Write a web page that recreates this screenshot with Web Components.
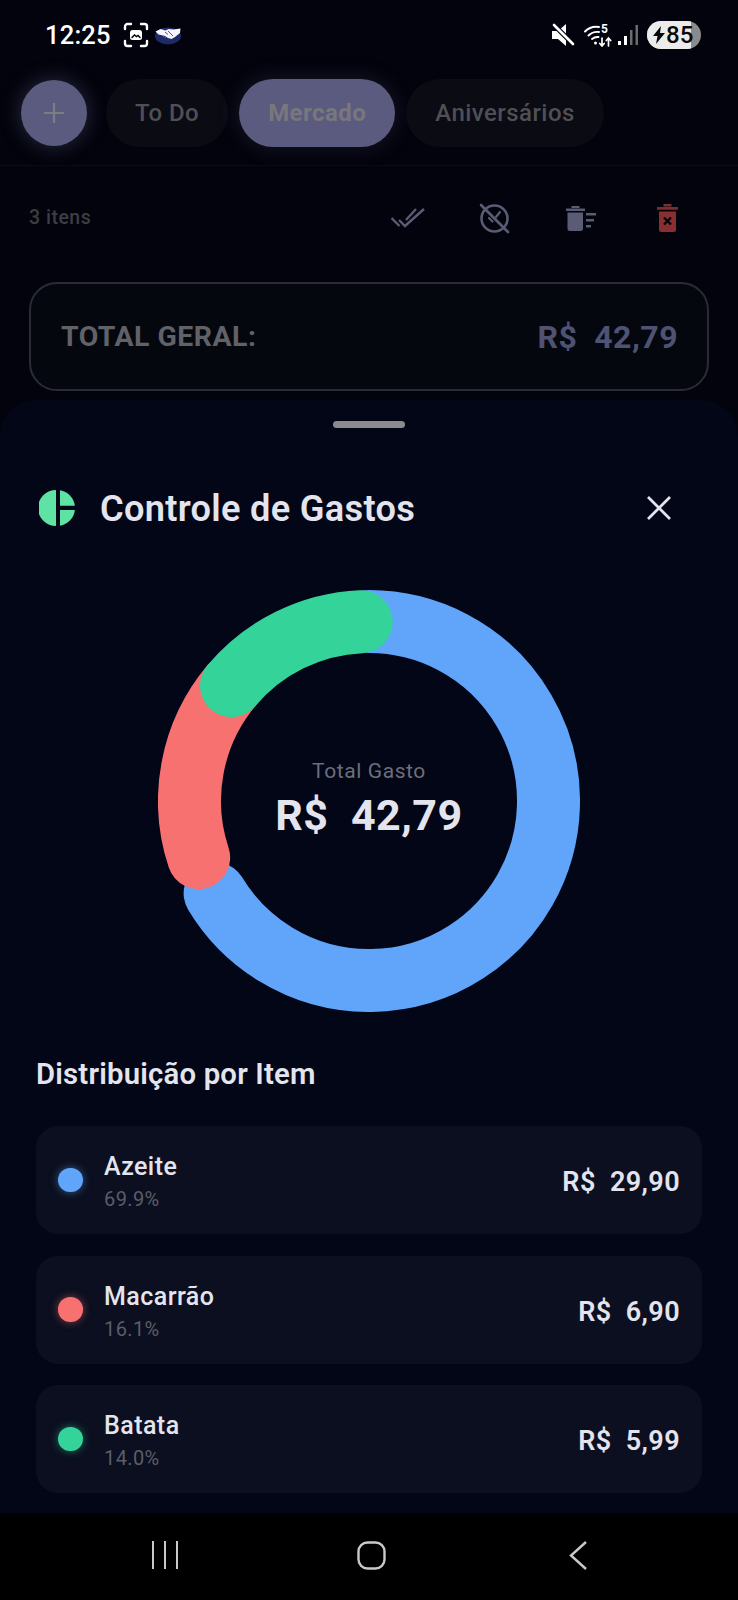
<!DOCTYPE html>
<html>
<head>
<meta charset="utf-8">
<title>Controle de Gastos</title>
<style>
  html, body { margin: 0; padding: 0; background: #02030c; }
  body { width: 738px; height: 1600px; overflow: hidden; font-family: Roboto, "Liberation Sans", sans-serif; display: flex; flex-direction: column; }
</style>
</head>
<body>
<app-screen>
  <status-bar></status-bar>
  <list-tabs></list-tabs>
  <list-toolbar></list-toolbar>
  <total-card></total-card>
</app-screen>
<bottom-sheet>
  <sheet-title></sheet-title>
  <donut-chart total="R$&nbsp; 42,79"></donut-chart>
  <h-label>Distribuição por Item</h-label>
  <expense-row name="Azeite" pct="69.9%" value="R$&nbsp; 29,90" color="#60a5fa"></expense-row>
  <expense-row name="Macarrão" pct="16.1%" value="R$&nbsp; 6,90" color="#f87171"></expense-row>
  <expense-row name="Batata" pct="14.0%" value="R$&nbsp; 5,99" color="#34d399"></expense-row>
</bottom-sheet>
<nav-bar></nav-bar>

<script>
function shadow(el, html) {
  el.attachShadow({ mode: 'open' });
  el.shadowRoot.innerHTML = html;
}

class AppScreen extends HTMLElement {
  constructor() {
    super();
    shadow(this, `<style>:host { display: block; height: 400px; flex: none; }</style><slot></slot>`);
  }
}

class StatusBar extends HTMLElement {
  constructor() {
    super();
    shadow(this, `
    <style>
      :host { display: flex; align-items: center; height: 70px; padding: 0 37px 0 45px; box-sizing: border-box; color: #fff; }
      .time { font-size: 25.5px; font-weight: 500; letter-spacing: .2px; margin-right: 12px; }
      .right { margin-left: auto; display: flex; align-items: center; }
      svg { display: block; }
      .batt { position: relative; width: 54px; height: 28px; border-radius: 14px; background: #8b8b8d; overflow: hidden; margin-left: 8px; color: #0a0a0a; font-size: 24px; font-weight: 500; }
      .batt i { display: block; width: 44px; height: 100%; background: #ececec; }
      .batt span { position: absolute; left: 19px; top: 1px; line-height: 26px; }
      .batt svg { position: absolute; left: 5px; top: 5px; }
    </style>
    <span class="time">12:25</span>
    <svg width="26" height="26" viewBox="0 0 26 26" fill="none" stroke="#fff" stroke-width="2.4" stroke-linecap="round">
      <path d="M2 7V4.500A2.500 2.500 0 0 1 4.500 2H8M18 2h3.500A2.500 2.500 0 0 1 24 4.500V7M24 19v2.500a2.500 2.500 0 0 1-2.500 2.500H18M8 24H4.500A2.500 2.500 0 0 1 2 21.500V19"/>
      <rect x="7" y="8" width="12" height="10" rx="2.500" fill="#fff" stroke="none"/>
      <path d="M9 15.500l2.500-2.500 2 1.500 1.500-1 2 2" stroke="#02030c" stroke-width="1.500"/>
    </svg>
    <svg width="28" height="20" viewBox="0 0 28 20" style="margin-left:5px">
      <ellipse cx="14" cy="11" rx="13" ry="8.500" fill="#1d2a66"/>
      <path d="M1.500 6.500l5-2.500 5 1.500 3-1.500 5 .5 7-1-.5 4.500-5 4-3.500 2-3.500-1-3-2-6.500-1.500z" fill="#f4f6fb"/>
      <path d="M11 7l3 2.500M9 11l3 2M14 6l5 5" stroke="#4a5aa0" stroke-width="1" fill="none"/>
    </svg>
    <div class="right">
      <svg width="24" height="24" viewBox="0 0 24 24">
        <path d="M1 8h6l8-7v22l-8-7H1z" fill="#fff"/>
        <path d="M2 1l21 21" stroke="#02030c" stroke-width="5"/>
        <path d="M3 2l19 19" stroke="#fff" stroke-width="2.600" stroke-linecap="round"/>
      </svg>
      <svg width="28" height="24" viewBox="0 0 28 24" fill="none" stroke="#fff" stroke-width="1.900" stroke-linecap="round" style="margin-left:9px">
        <path d="M1 8.500C5 4.500 10 3 15 4"/>
        <path d="M4.500 12.500C7.500 9.500 11 8.500 15 9"/>
        <path d="M8 16c2-1.700 4-2.300 6.500-2"/>
        <circle cx="11.500" cy="20" r="1.500" fill="#fff" stroke="none"/>
        <text x="17" y="10" font-size="12" font-weight="700" fill="#fff" stroke="none">5</text>
        <path d="M18 23v-8M15.800 20.500l2.200 2.500 2.200-2.500M24.500 23v-8M22.300 17.500l2.200-2.500 2.200 2.500" stroke-width="1.700"/>
      </svg>
      <svg width="22" height="24" viewBox="0 0 22 24" style="margin-left:5px">
        <rect x="1" y="18" width="3" height="4" fill="#fff"/>
        <rect x="7" y="13" width="3" height="9" fill="#fff"/>
        <rect x="13" y="7" width="2.500" height="15" fill="#6b6b6e"/>
        <rect x="18.500" y="2" width="2.500" height="20" fill="#6b6b6e"/>
      </svg>
      <div class="batt"><i></i>
        <svg width="14" height="18" viewBox="0 0 14 18"><path d="M9 0L1 10h4.500L4 18l9-11H8z" fill="#0a0a0a"/></svg>
        <span>85</span>
      </div>
    </div>`);
  }
}

class ListTabs extends HTMLElement {
  constructor() {
    super();
    shadow(this, `
    <style>
      :host { display: flex; align-items: center; gap: 11px; height: 96px; padding: 9px 0 18px 21px; box-sizing: border-box; border-bottom: 1px solid #0a0b13; }
      .add { width: 66px; height: 66px; border-radius: 50%; background: #5b5b80; box-shadow: 0 0 18px 3px rgba(91,91,128,.35); display: flex; align-items: center; justify-content: center; margin-right: 8px; }
      .tab { height: 68px; border-radius: 34px; padding: 0 29px; display: flex; align-items: center; background: #0a0b13; color: #4f4f55; font-size: 24px; font-weight: 500; letter-spacing: .45px; }
      .tab.on { background: #5b5b80; color: #77777c; box-shadow: 0 0 20px 2px rgba(91,91,128,.22); font-weight: 700; }
    </style>
    <div class="add"><svg width="24" height="24" viewBox="0 0 24 24"><path d="M12 2v20M2 12h20" stroke="#7c7c83" stroke-width="2.200"/></svg></div>
    <div class="tab">To Do</div>
    <div class="tab on">Mercado</div>
    <div class="tab">Aniversários</div>`);
  }
}

class ListToolbar extends HTMLElement {
  constructor() {
    super();
    shadow(this, `
    <style>
      :host { display: flex; align-items: center; height: 104px; padding: 0 51px 0 29px; box-sizing: border-box; }
      .count { color: #3d3d43; font-size: 19.5px; font-weight: 500; letter-spacing: .5px; margin-bottom: 2px; }
      .icons { margin-left: auto; display: flex; align-items: center; gap: 46.5px; }
      .icons span { width: 40px; display: flex; justify-content: center; }
      svg { display: block; }
    </style>
    <span class="count">3 itens</span>
    <div class="icons">
      <span><svg width="34" height="20" viewBox="0 0 34 20" fill="none" stroke="#5a5b74" stroke-width="2.400">
        <path d="M.5 10l8 8M8 12l6 6L33 1M15 12L25 1"/>
      </svg></span>
      <span><svg width="31" height="31" viewBox="0 0 31 31" fill="none" stroke="#5a5b74" stroke-width="2.600" stroke-linecap="round">
        <circle cx="15.500" cy="15.500" r="13"/>
        <path d="M2 2l27 27"/>
        <path d="M10 15l3.500 3.500M17 14l4-5" stroke-width="2.200"/>
      </svg></span>
      <span><svg width="30" height="25" viewBox="0 0 30 25" fill="#5a5b74">
        <path d="M0 2.500h19v2.600H0zM5.500 0h8v2H5.500z"/>
        <path d="M1.500 6.500h15.500v16a2.500 2.500 0 0 1-2.500 2.500H4a2.500 2.500 0 0 1-2.500-2.500z"/>
        <path d="M20 7h10v2.400H20zM20 13h8v2.400h-8zM20 19h5v2.400h-5z"/>
      </svg></span>
      <span><svg width="21" height="28" viewBox="0 0 21 28">
        <path d="M0 3h21v2.800H0zM6.500 0h8v2.500h-8z" fill="#7f2e2e"/>
        <path d="M2 7.500h17v18a2.500 2.500 0 0 1-2.500 2.500h-12A2.500 2.500 0 0 1 2 25.500z" fill="#8a2f2f"/>
        <path d="M7 13.500l7 7M14 13.500l-7 7" stroke="#02030c" stroke-width="2.400"/>
      </svg></span>
    </div>`);
  }
}

class TotalCard extends HTMLElement {
  constructor() {
    super();
    shadow(this, `
    <style>
      :host { display: flex; align-items: center; justify-content: space-between; height: 109px; margin: 12px 29px 0; padding: 0 29px 0 30px; box-sizing: border-box; border: 2px solid #2a2b3a; border-radius: 28px; background: #05070f; font-weight: 700; letter-spacing: .5px; }
      .l { color: #616168; font-size: 28.4px; }
      .v { color: #4f5273; font-size: 32px; }
    </style>
    <span class="l">TOTAL GERAL:</span><span class="v">R$&nbsp; 42,79</span>`);
  }
}

class BottomSheet extends HTMLElement {
  constructor() {
    super();
    shadow(this, `
    <style>
      :host { display: block; flex: none; height: 1113px; box-sizing: border-box; background: #020617; border-radius: 36px 36px 0 0; padding: 0 36px; }
      .grip { width: 72px; height: 7px; border-radius: 4px; background: #8a8a8f; margin: 21px auto 0; }
    </style>
    <div class="grip"></div>
    <slot></slot>`);
  }
}

class SheetTitle extends HTMLElement {
  constructor() {
    super();
    shadow(this, `
    <style>
      :host { display: flex; align-items: center; height: 40px; margin-top: 60px; padding-left: 3px; color: #e4e4ee; font-size: 36.2px; font-weight: 600; letter-spacing: .3px; }
      .t { margin-left: 25px; }
      .x { margin-left: auto; margin-right: 30px; }
      svg { display: block; }
    </style>
    <svg width="36" height="36" viewBox="0 0 36 36" fill="#5fe3a4">
      <path d="M17 0A18 18 0 0 0 17 36z"/>
      <path d="M21 .25A18 18 0 0 1 35.850 15.700H21z"/>
      <path d="M21 20H35.900A18 18 0 0 1 21 35.750z"/>
    </svg>
    <span class="t">Controle de Gastos</span>
    <svg class="x" width="26" height="26" viewBox="0 0 26 26"><path d="M2 2l22 22M24 2L2 24" stroke="#e4e4ee" stroke-width="2.800"/></svg>`);
  }
}

class DonutChart extends HTMLElement {
  constructor() {
    super();
    const arcs = [
      { from: 0, to: 239, color: '#60a5fa' },
      { from: 251.6, to: 310, color: '#f87171' },
      { from: 310, to: 357.5, color: '#34d399' },
    ];
    const r = 179.5, c = 211;
    const pt = a => {
      const t = a * Math.PI / 180;
      return `${(c + r * Math.sin(t)).toFixed(2)} ${(c - r * Math.cos(t)).toFixed(2)}`;
    };
    const paths = arcs.map(s =>
      `<path d="M${pt(s.from)}A${r} ${r} 0 ${s.to - s.from > 180 ? 1 : 0} 1 ${pt(s.to)}" stroke="${s.color}"/>`
    ).join('');
    shadow(this, `
    <style>
      :host { display: block; position: relative; width: 422px; height: 422px; margin: 62px auto 0; }
      svg { display: block; }
      .c { position: absolute; inset: 0; box-sizing: border-box; padding-bottom: 4px; display: flex; flex-direction: column; align-items: center; justify-content: center; }
      .l { color: #6d6e78; font-size: 21px; letter-spacing: .6px; }
      .v { color: #e4e4ee; font-size: 43px; font-weight: 700; letter-spacing: .5px; margin-top: 7px; }
    </style>
    <svg width="422" height="422" viewBox="0 0 422 422" fill="none" stroke-width="63" stroke-linecap="round">${paths}</svg>
    <div class="c"><span class="l">Total Gasto</span><span class="v">${this.getAttribute('total')}</span></div>`);
  }
}

class HLabel extends HTMLElement {
  constructor() {
    super();
    shadow(this, `<style>:host { display: block; margin: 46px 0 36px; color: #e4e4ee; font-size: 29.3px; font-weight: 600; letter-spacing: .2px; line-height: 32px; }</style><slot></slot>`);
  }
}

class ExpenseRow extends HTMLElement {
  constructor() {
    super();
    const color = this.getAttribute('color');
    shadow(this, `
    <style>
      :host { display: flex; align-items: center; height: 108px; margin-bottom: 21.5px; padding: 0 22px; box-sizing: border-box; background: #0b0f1f; border-radius: 22px; }
      .dot { width: 24.5px; height: 24.5px; border-radius: 50%; background: ${color}; box-shadow: 0 0 8px ${color}80; flex: none; }
      .info { margin-left: 21.5px; padding-top: 3px; display: flex; flex-direction: column; }
      .n { color: #e4e4ee; font-size: 25px; font-weight: 500; letter-spacing: .45px; line-height: 30px; }
      .p { color: #5c5d68; font-size: 20px; letter-spacing: .4px; line-height: 24px; margin-top: 5px; }
      .v { margin-left: auto; padding-top: 4px; color: #e4e4ee; font-size: 27px; font-weight: 600; letter-spacing: .4px; }
    </style>
    <span class="dot"></span>
    <div class="info"><span class="n">${this.getAttribute('name')}</span><span class="p">${this.getAttribute('pct')}</span></div>
    <span class="v">${this.getAttribute('value')}</span>`);
  }
}

class NavBar extends HTMLElement {
  constructor() {
    super();
    shadow(this, `
    <style>
      :host { display: flex; flex: none; height: 87px; background: #000; justify-content: center; align-items: center; padding: 0 0 3px 4px; box-sizing: border-box; }
      .s { width: 206.5px; display: flex; justify-content: center; }
      svg { display: block; }
    </style>
    <div class="s"><svg width="28" height="28" viewBox="0 0 28 28" stroke="#c9c9c9" stroke-width="2"><path d="M2 0v28M14 0v28M26 0v28"/></svg></div>
    <div class="s"><svg width="29" height="29" viewBox="0 0 29 29" fill="none" stroke="#c9c9c9" stroke-width="2.400"><rect x="1.500" y="1.500" width="26" height="26" rx="9"/></svg></div>
    <div class="s"><svg width="19" height="29" viewBox="0 0 19 29" fill="none" stroke="#c9c9c9" stroke-width="2.400"><path d="M18 1L3 14.500 18 28"/></svg></div>`);
  }
}

customElements.define('app-screen', AppScreen);
customElements.define('status-bar', StatusBar);
customElements.define('list-tabs', ListTabs);
customElements.define('list-toolbar', ListToolbar);
customElements.define('total-card', TotalCard);
customElements.define('bottom-sheet', BottomSheet);
customElements.define('sheet-title', SheetTitle);
customElements.define('donut-chart', DonutChart);
customElements.define('h-label', HLabel);
customElements.define('expense-row', ExpenseRow);
customElements.define('nav-bar', NavBar);
</script>
</body>
</html>
